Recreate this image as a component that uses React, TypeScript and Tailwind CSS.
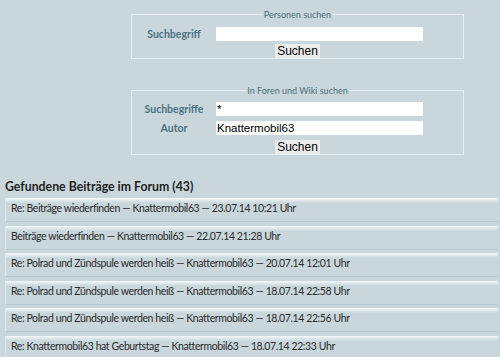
const rows = [
  'Re: Beiträge wiederfinden — Knattermobil63 — 23.07.14 10:21 Uhr',
  'Beiträge wiederfinden — Knattermobil63 — 22.07.14 21:28 Uhr',
  'Re: Polrad und Zündspule werden heiß — Knattermobil63 — 20.07.14 12:01 Uhr',
  'Re: Polrad und Zündspule werden heiß — Knattermobil63 — 18.07.14 22:58 Uhr',
  'Re: Polrad und Zündspule werden heiß — Knattermobil63 — 18.07.14 22:56 Uhr',
  'Re: Knattermobil63 hat Geburtstag — Knattermobil63 — 18.07.14 22:33 Uhr',
];

const SearchButton = () => (
  <div className="flex justify-center">
    <button className="h-[14px] px-[2px] bg-[#ececec] text-[12px] leading-[14px] text-black font-['Liberation_Sans',Arial,sans-serif]">
      Suchen
    </button>
  </div>
);

const Field = ({ label, value }: { label: string; value: string }) => (
  <div className="grid grid-cols-[84px_207px] items-center">
    <span className="text-center text-[10.5px] font-bold leading-[14px] text-[#4b7282]">{label}</span>
    <div className="h-[14px] bg-white pl-[1px] text-[11.5px] leading-[14px] text-black font-['Liberation_Sans',Arial,sans-serif]">
      {value}
    </div>
  </div>
);

export default function App() {
  return (
    <div className="min-h-[357px] w-[500px] overflow-hidden bg-[#c9d7dc] font-['Lato',sans-serif] text-[#2b2b2b]">
      <div className="ml-[131px] w-[333px]">
        <fieldset className="mt-[8px] border border-[#e6eef1]">
          <legend className="mx-auto px-[1px] text-[9px] leading-[13px] text-[#4f6f7b]">Personen suchen</legend>
          <div className="pt-[6px]">
            <Field label="Suchbegriff" value="" />
          </div>
          <div className="mt-[3px]">
            <SearchButton />
          </div>
        </fieldset>

        <fieldset className="mt-[25px] border border-[#e6eef1]">
          <legend className="mx-auto px-[1px] text-[9px] leading-[13px] text-[#4f6f7b]">In Foren und Wiki suchen</legend>
          <div className="flex flex-col gap-[5px] pt-[5px]">
            <Field label="Suchbegriffe" value="*" />
            <Field label="Autor" value="Knattermobil63" />
          </div>
          <div className="mt-[5px]">
            <SearchButton />
          </div>
        </fieldset>
      </div>

      <h2 className="mt-[24px] ml-[5px] text-[12.3px] font-bold leading-[16px] text-[#1f1f1f]">
        Gefundene Beiträge im Forum (43)
      </h2>

      <div className="mt-[3px] ml-[5px] mr-[2px] flex flex-col gap-[3.5px]">
        {rows.map((r, i) => (
          <div
            key={i}
            className="h-[24px] border-l border-b border-l-[#dde7eb] border-b-[#b9c8ce] bg-[linear-gradient(to_bottom,#f6f9fb_0px,#e2ebee_2px,#c9d7dc_5px)] pl-[5px] pt-[3px] text-[10.5px] leading-[14px] tracking-[-0.4px] whitespace-nowrap"
          >
            {r}
          </div>
        ))}
      </div>
    </div>
  );
}
